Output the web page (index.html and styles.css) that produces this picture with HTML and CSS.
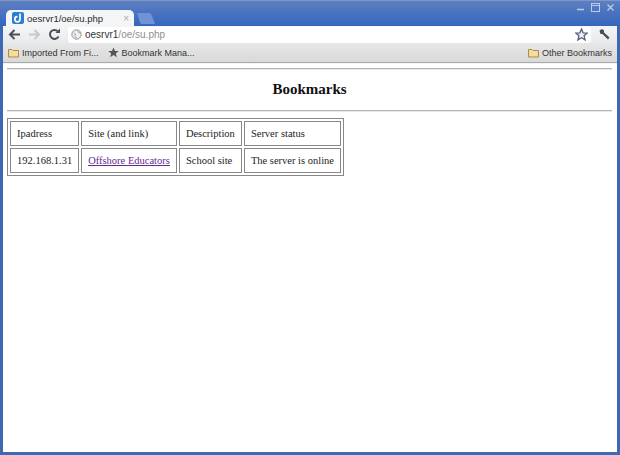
FILE: index.html
```html
<!DOCTYPE html>
<html lang="en">
<head>
<meta charset="utf-8">
<title>oesrvr1/oe/su.php</title>
<link rel="stylesheet" href="styles.css">
</head>
<body>
<div class="window">
  <div class="tabstrip">
    <div class="tab">
      <svg class="favicon" width="12" height="12" viewBox="0 0 12 12"><rect width="12" height="12" rx="2" fill="#2c7fd0"/><path d="M8 1.5V7.2A2.6 2.6 0 1 1 5.4 4.6" fill="none" stroke="#fff" stroke-width="1.7"/></svg>
      <span class="tab-title">oesrvr1/oe/su.php</span>
      <span class="tab-close">×</span>
    </div>
    <svg class="newtab" width="18" height="11" viewBox="0 0 18 11"><path d="M0 0H12Q14 0 15 3L18 11H5Q3 11 2.500 8Z" fill="#6f93d4"/></svg>
    <div class="winbtns">
      <svg width="13" height="11" viewBox="0 0 13 11"><path d="M3 7.500H10" stroke="#b9cdec" stroke-width="1.500"/></svg>
      <svg width="13" height="11" viewBox="0 0 13 11"><rect x="2.500" y="1.500" width="8" height="8" fill="none" stroke="#b9cdec"/><path d="M3 3.500H10" stroke="#b9cdec"/></svg>
      <svg width="13" height="11" viewBox="0 0 13 11"><path d="M3.500 2.500L9.500 8.500M9.500 2.500L3.500 8.500" stroke="#b9cdec" stroke-width="1.300"/></svg>
    </div>
  </div>
  <div class="toolbar">
    <svg class="tool" width="13" height="13" viewBox="0 0 13 13"><path d="M12 6.500H3M6.500 2L2 6.500L6.500 11" fill="none" stroke="#4a5058" stroke-width="2"/></svg>
    <svg class="tool" width="13" height="13" viewBox="0 0 13 13"><path d="M1 6.500H10M6.500 2L11 6.500L6.500 11" fill="none" stroke="#c6c9cd" stroke-width="2"/></svg>
    <svg class="tool" width="13" height="13" viewBox="0 0 13 13"><path d="M10.500 8.500A4.500 4.500 0 1 1 9.800 3.300" fill="none" stroke="#4a5058" stroke-width="2"/><path d="M7.500 5H12V0.500Z" fill="#4a5058"/></svg>
    <div class="omnibox">
      <svg width="11" height="11" viewBox="0 0 11 11"><circle cx="5.500" cy="5.500" r="4.700" fill="#eef0f2" stroke="#8b9096"/><path d="M3 3.500Q5 5 4 6.500T6 9M6 1.500Q7 4 9.500 4" fill="none" stroke="#a3a8ae"/></svg>
      <span class="url"><span class="host">oesrvr1</span>/oe/su.php</span>
      <svg class="star" width="13" height="13" viewBox="0 0 13 13"><path d="M6.500 1L8.100 4.800L12.200 5.100L9.100 7.800L10.100 11.900L6.500 9.700L2.900 11.900L3.900 7.800L0.800 5.100L4.900 4.800Z" fill="#eef0fa" stroke="#5a5f78" stroke-width="1.300"/></svg>
    </div>
    <svg class="wrench" width="13" height="13" viewBox="0 0 13 13"><path d="M1.500 2.500L4 1L6 2.500V4.500L11.500 9.500L10 11.500L4.500 6H2.500Z" fill="#474c52"/></svg>
  </div>
  <div class="bookmarks">
    <span class="bm"><svg width="11" height="10" viewBox="0 0 11 10"><path d="M0.500 9V1.500H4L5 2.500H10.500V9Z" fill="#f3dc9c" stroke="#a98b4a"/></svg>Imported From Fi...</span>
    <span class="bm"><svg width="11" height="11" viewBox="0 0 11 11"><path d="M5.500 0.500L7 4H10.800L7.800 6.400L8.900 10.300L5.500 8.100L2.100 10.300L3.200 6.400L0.200 4H4Z" fill="#555"/></svg>Bookmark Mana...</span>
    <span class="bm bm-right"><svg width="11" height="10" viewBox="0 0 11 10"><path d="M0.500 9V1.500H4L5 2.500H10.500V9Z" fill="#f3dc9c" stroke="#a98b4a"/></svg>Other Bookmarks</span>
  </div>
  <main class="page">
    <hr class="rule">
    <h1 class="title">Bookmarks</h1>
    <hr class="rule">
    <table class="sites">
      <tr><td>Ipadress</td><td>Site (and link)</td><td>Description</td><td>Server status</td></tr>
      <tr><td>192.168.1.31</td><td><a href="#">Offshore Educators</a></td><td>School site</td><td>The server is online</td></tr>
    </table>
  </main>
</div>
</body>
</html>
```
FILE: styles.css
```css
html, body {
  margin: 0;
  height: 100%;
}
.window {
  box-sizing: border-box;
  width: 620px;
  height: 455px;
  display: flex;
  flex-direction: column;
  overflow: hidden;
  padding: 0 3px 3px 2px;
  background: #3f68b4;
  font-family: "Liberation Sans", Arial, sans-serif;
}
.tabstrip {
  height: 26px;
  margin: 0 -3px 0 -2px;
  padding: 0 3px 0 6px;
  display: flex;
  align-items: flex-end;
  background: linear-gradient(#5d7fc0, #3566bf);
  border-top: 1px solid #7d96c6;
  box-sizing: border-box;
}
.tab {
  width: 117px;
  height: 16px;
  padding: 0 5px 0 6px;
  display: flex;
  align-items: center;
  gap: 3px;
  border-radius: 5px 5px 0 0;
  background: #f4f5f6;
  font-size: 9.500px;
  color: #2c2c2c;
}
.tab-title {
  flex: 1;
  white-space: nowrap;
}
.tab-close {
  color: #aaa;
  font-size: 10px;
}
.newtab {
  margin: 0 0 2px 3px;
}
.winbtns {
  align-self: flex-start;
  margin-left: auto;
  padding-top: 1px;
  display: flex;
  gap: 2px;
}
.toolbar {
  height: 17px;
  margin-left: 1px;
  display: flex;
  align-items: center;
  gap: 4px;
  padding: 0 6px 0 5px;
  background: linear-gradient(#f4f5f6, #e9eaec);
}
.tool {
  margin-right: 3px;
}
.omnibox {
  flex: 1;
  height: 16px;
  display: flex;
  align-items: center;
  gap: 3px;
  padding: 0 3px;
  background: #fff;
  border-radius: 3px;
  font-size: 10px;
  color: #8f8f8f;
}
.host {
  color: #333;
}
.star {
  margin-left: auto;
}
.wrench {
  margin-left: 3px;
}
.bookmarks {
  height: 20px;
  margin-left: 1px;
  padding: 0 5px;
  display: flex;
  align-items: center;
  gap: 9px;
  background: linear-gradient(#e7e7e8, #d9d9da);
  border-bottom: 1px solid #a9a9a9;
  box-sizing: border-box;
  font-size: 9px;
  color: #333;
}
.bm {
  display: flex;
  align-items: center;
  gap: 3px;
}
.bm-right {
  margin-left: auto;
}
.page {
  flex: 1;
  margin-left: 1px;
  padding: 1px 5px 0 4px;
  background: #fff;
  font-family: "Liberation Serif", "Times New Roman", serif;
  border-top: 1px solid #f4f4f4;
}
.rule {
  margin: 3px 0 0;
  height: 0;
  border: 0;
  border-top: 1px solid #b4b4b4;
  border-bottom: 1px solid #e8e8e8;
}
.title {
  margin: 11px 0 12px;
  text-align: center;
  font-size: 15px;
  line-height: 17px;
  color: #111;
}
.sites {
  margin-top: 6px;
  border: 1px solid #888;
  border-spacing: 2px;
  font-size: 10.500px;
  color: #222;
}
.sites td {
  height: 21px;
  padding: 1px 6px;
  border: 1px solid #888;
  white-space: nowrap;
}
.sites a {
  color: #62298f;
}
```
